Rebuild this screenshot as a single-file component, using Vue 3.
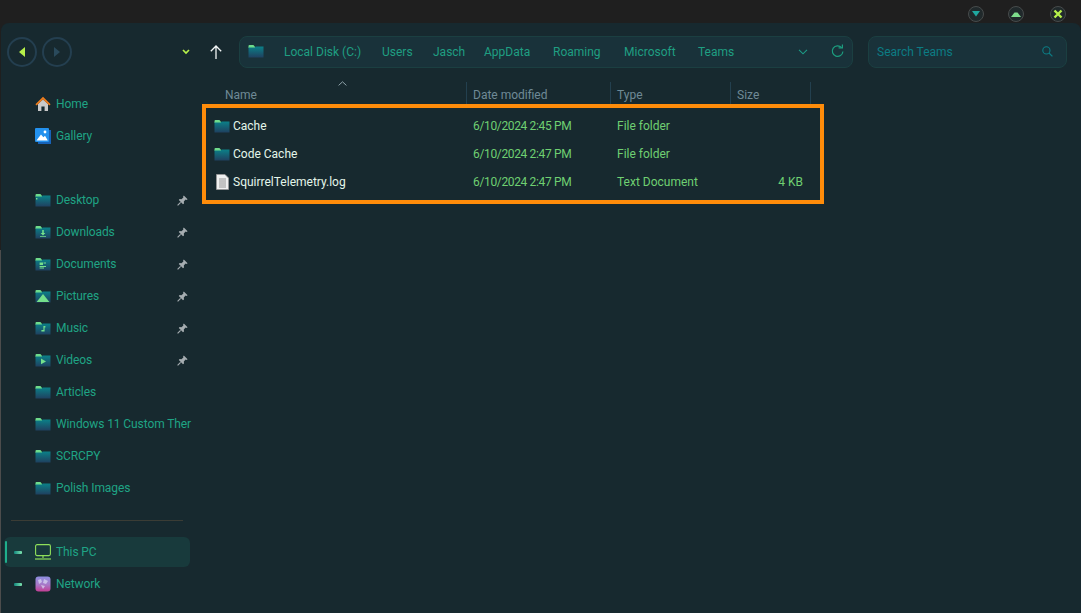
<template>
  <div class="app">
    <svg class="defs" width="0" height="0">
      <defs>
        <linearGradient id="folderBody" x1="0" y1="0" x2="0" y2="1">
          <stop offset="0" stop-color="#0b8088" />
          <stop offset="1" stop-color="#1f4160" />
        </linearGradient>
        <symbol id="folder" viewBox="0 0 16 13">
          <path d="M.5 1C.5 .4 .9 0 1.4 0H5.4L7 1.8V3H.5Z" fill="#6fdc8c" />
          <path d="M.5 2.6H6.8L7.6 1.6H15.5V12.4H.5Z" fill="url(#folderBody)" />
        </symbol>
      </defs>
    </svg>

    <header class="titlebar">
      <button class="win-btn"><svg width="8" height="6" viewBox="0 0 8 6"><path d="M0 0H8L4 5.5Z" fill="#1fa8a0" /></svg></button>
      <button class="win-btn"><svg width="10" height="6" viewBox="0 0 10 6"><path d="M0 6L3.5 1.5H6.5L10 6Z" fill="#7ddc8c" /></svg></button>
      <button class="win-btn"><svg width="10" height="10" viewBox="0 0 10 10"><path d="M1.5 1.5L8.5 8.5M8.5 1.5L1.5 8.5" stroke="#b6f04a" stroke-width="2.4" /></svg></button>
    </header>

    <div class="window">
      <div class="toolbar">
        <button class="nav-btn">
          <svg width="8" height="12" viewBox="0 0 8 12"><path d="M7 1V11L1 6Z" fill="#b6f04a" /></svg>
        </button>
        <button class="nav-btn">
          <svg width="8" height="12" viewBox="0 0 8 12"><path d="M1 1V11L7 6Z" fill="#2a4a5c" /></svg>
        </button>
        <svg class="recent" width="8" height="6" viewBox="0 0 8 6"><path d="M1 1L4 4L7 1" fill="none" stroke="#b6f04a" stroke-width="1.7" /></svg>
        <svg class="up" width="12" height="14" viewBox="0 0 12 14"><path d="M6 14V1M.8 6.2L6 1L11.2 6.2" fill="none" stroke="#f2f6f6" stroke-width="1.3" /></svg>

        <div class="address">
          <svg class="addr-folder" width="16" height="13"><use href="#folder" /></svg>
          <span v-for="c in crumbs" :key="c.name" class="crumb" :style="{ width: c.w + 'px' }">{{ c.name }}</span>
          <svg class="addr-chevron" width="10" height="6" viewBox="0 0 10 6"><path d="M1 .8L5 4.8L9 .8" fill="none" stroke="#1c9c86" stroke-width="1.1" /></svg>
          <svg class="addr-refresh" width="13" height="13" viewBox="0 0 13 13"><path d="M10.6 2.6A5.3 5.3 0 1 0 11.9 6.5" fill="none" stroke="#1c9c7e" stroke-width="1.2" /><path d="M7.6 2.8H11.4V-.6" fill="none" stroke="#1c9c7e" stroke-width="1.2" /></svg>
        </div>

        <div class="search">
          <span>Search Teams</span>
          <svg width="11" height="11" viewBox="0 0 11 11"><circle cx="4.4" cy="4.4" r="3.6" fill="none" stroke="#0c7c84" stroke-width="1.1" /><path d="M7 7L10.4 10.4" stroke="#0c7c84" stroke-width="1.2" /></svg>
        </div>
      </div>

      <div class="body">
        <nav class="sidebar">
          <template v-for="(item, i) in nav" :key="i">
            <div v-if="item.sep" class="sep-slot"><div v-if="!item.hidden" class="sep"></div></div>
            <div v-else class="nav-row" :class="{ active: item.active }">
              <span v-if="item.active" class="indicator"></span>
              <span class="expander"><i v-if="item.expand"></i></span>

              <svg v-if="item.icon === 'home'" class="nav-icon" width="16" height="16" viewBox="0 0 16 16">
                <path d="M3 8V15H6.4V10.6H9.6V15H13V8L8 3.4Z" fill="#c9c9c9" />
                <path d="M.4 8.2L8 .8L15.6 8.2L14.4 9.4L8 3.4L1.6 9.4Z" fill="#ee7d1e" />
              </svg>
              <svg v-else-if="item.icon === 'gallery'" class="nav-icon" width="16" height="16" viewBox="0 0 16 16">
                <rect x="3" y="2" width="13" height="14" fill="#1762b8" />
                <rect x="0" y="0" width="14" height="14" rx="1" fill="#2391ee" />
                <path d="M1.4 12.6L6 6.6L8.4 9.2L10 7.8L12.8 12.6Z" fill="#fff" />
                <circle cx="10" cy="4" r="1.4" fill="#fff" />
              </svg>
              <svg v-else-if="item.icon === 'pc'" class="nav-icon" width="16" height="16" viewBox="0 0 16 16">
                <rect x=".6" y=".6" width="14.8" height="11" rx="1.5" fill="none" stroke="#8fe05a" stroke-width="1.1" />
                <path d="M7.4 12V14H8.6V12Z" fill="#8fe05a" />
                <path d="M0 15H16" stroke="#8fe05a" stroke-width="1.2" />
              </svg>
              <svg v-else-if="item.icon === 'network'" class="nav-icon" width="16" height="16" viewBox="0 0 16 16">
                <defs>
                  <linearGradient id="netFill" x1="0" y1="0" x2="0" y2="1">
                    <stop offset="0" stop-color="#8f8fe0" />
                    <stop offset=".55" stop-color="#a878c8" />
                    <stop offset="1" stop-color="#c23e94" />
                  </linearGradient>
                </defs>
                <rect width="15" height="15" x=".5" y=".5" rx="3" fill="url(#netFill)" />
                <path d="M3 4L6 3L7 6L4 8ZM9 3L13 5L11 8L8 7ZM6 9L10 10L8 13Z" fill="#d8d4f0" opacity=".75" />
              </svg>
              <svg v-else class="nav-icon" width="16" height="13" viewBox="0 0 16 13">
                <use href="#folder" />
                <path v-if="item.glyph" :d="item.glyph" fill="#74e08c" />
              </svg>

              <span class="nav-label">{{ item.label }}</span>
              <svg v-if="item.pin" class="pin" width="11" height="11" viewBox="0 0 11 11">
                <path d="M6.8 .4L10.6 4.2L9.6 4.9L8.6 4.6L6.8 6.6L7 8.4L6 9.2L1.8 5L2.6 4L4.4 4.2L6.4 2.4L6.1 1.4Z" fill="#a6adb1" />
                <path d="M3.6 7.4L.6 10.4" stroke="#a6adb1" stroke-width="1.2" />
              </svg>
            </div>
          </template>
        </nav>

        <main class="files">
          <div class="cols head">
            <span class="hcell name-head">
              Name
              <svg class="sort" width="9" height="5" viewBox="0 0 9 5"><path d="M.6 4.4L4.5 .8L8.4 4.4" fill="none" stroke="#8fa3aa" stroke-width="1" /></svg>
            </span>
            <span class="hcell">Date modified</span>
            <span class="hcell">Type</span>
            <span class="hcell">Size</span>
          </div>

          <div class="highlight">
            <div v-for="f in files" :key="f.name" class="cols row">
              <span class="cell file-name">
                <svg v-if="f.folder" width="16" height="13" viewBox="0 0 16 13"><use href="#folder" /></svg>
                <svg v-else width="13" height="16" viewBox="0 0 13 16" class="doc">
                  <path d="M.5 .5H9L12.5 4V15.5H.5Z" fill="#f0f0f0" stroke="#9a9a9a" stroke-width=".8" />
                  <path d="M3 5H10M3 7H10M3 9H10M3 11H10M3 13H10" stroke="#8a8a8a" stroke-width=".9" />
                </svg>
                <span>{{ f.name }}</span>
              </span>
              <span class="cell date">{{ f.date }}</span>
              <span class="cell">{{ f.type }}</span>
              <span class="cell size">{{ f.size }}</span>
            </div>
          </div>
        </main>
      </div>
    </div>
  </div>
</template>

<script setup>
const crumbs = [
  { name: 'Local Disk (C:)', w: 98 },
  { name: 'Users', w: 51 },
  { name: 'Jasch', w: 51 },
  { name: 'AppData', w: 69 },
  { name: 'Roaming', w: 71 },
  { name: 'Microsoft', w: 74 },
  { name: 'Teams', w: 50 }
]

const nav = [
  { label: 'Home', icon: 'home' },
  { label: 'Gallery', icon: 'gallery' },
  { sep: true, hidden: true },
  { label: 'Desktop', pin: true, glyph: 'M1 4H2.4V5.4H1Z' },
  { label: 'Downloads', pin: true, glyph: 'M7.2 4H8.8V7H10.4L8 9.6L5.6 7H7.2ZM5 10.2H11V11H5Z' },
  { label: 'Documents', pin: true, glyph: 'M4.6 4.4H8V7H4.6ZM8.6 4.4H11V5.6H8.6ZM4.6 8H11V9H4.6ZM4.6 9.6H9V10.4H4.6Z' },
  { label: 'Pictures', pin: true, glyph: 'M1.6 12L8 4L14.4 12Z' },
  { label: 'Music', pin: true, glyph: 'M8.4 4H10.4V5.6H9.6V9.6H6.4V8H8.4Z' },
  { label: 'Videos', pin: true, glyph: 'M6 4.6L11 7.4L6 10.2Z' },
  { label: 'Articles' },
  { label: 'Windows 11 Custom Ther' },
  { label: 'SCRCPY' },
  { label: 'Polish Images' },
  { sep: true },
  { label: 'This PC', icon: 'pc', expand: true, active: true },
  { label: 'Network', icon: 'network', expand: true }
]

const files = [
  { name: 'Cache', folder: true, date: '6/10/2024 2:45 PM', type: 'File folder', size: '' },
  { name: 'Code Cache', folder: true, date: '6/10/2024 2:47 PM', type: 'File folder', size: '' },
  { name: 'SquirrelTelemetry.log', folder: false, date: '6/10/2024 2:47 PM', type: 'Text Document', size: '4 KB' }
]
</script>

<style>
html, body {
  margin: 0;
  background: #1f1f1f;
}
</style>

<style scoped>
.app {
  width: 1081px;
  height: 613px;
  display: flex;
  flex-direction: column;
  overflow: hidden;
  background: linear-gradient(#1f1f1f 250px, #4c4c4c 250px);
  font-family: Roboto, sans-serif;
  font-size: 12px;
}
.defs {
  position: absolute;
}
button {
  padding: 0;
  font: inherit;
  background: none;
}

.titlebar {
  height: 23px;
  flex: none;
  display: flex;
  justify-content: flex-end;
  align-items: flex-start;
  gap: 24px;
  padding: 6px 15px 0 0;
  box-sizing: border-box;
  background: #1f1f1f;
}
.win-btn {
  width: 16px;
  height: 16px;
  border: 1px solid #474b4b;
  border-radius: 50%;
  display: flex;
  align-items: center;
  justify-content: center;
  background: #20292b;
}
.win-btn:last-child {
  margin-left: 2px;
}

.window {
  flex: 1;
  margin-left: 1px;
  display: flex;
  flex-direction: column;
  background: #17292f;
  border-radius: 8px 8px 0 0;
}

.toolbar {
  height: 57px;
  flex: none;
  display: flex;
  align-items: center;
  padding: 0 14px 0 6px;
  box-sizing: border-box;
}
.nav-btn {
  width: 30px;
  height: 30px;
  margin-right: 5px;
  border: 2px solid #243f50;
  border-radius: 50%;
  display: flex;
  align-items: center;
  justify-content: center;
}
.recent {
  margin-left: 105px;
}
.up {
  margin-left: 20px;
}
.address,
.search {
  height: 32px;
  flex: none;
  display: flex;
  align-items: center;
  box-sizing: border-box;
  background: #19323a;
  border: 1px solid #1b3f41;
  border-radius: 8px;
}
.address {
  width: 614px;
  margin-left: 17px;
  padding-left: 8px;
  color: #1f9f82;
}
.addr-folder {
  margin-right: 20px;
  flex: none;
}
.crumb {
  flex: none;
  white-space: nowrap;
}
.addr-chevron {
  margin-left: 50px;
  flex: none;
}
.addr-refresh {
  margin-left: 23px;
  flex: none;
  overflow: visible;
}
.search {
  width: 199px;
  margin-left: 15px;
  padding: 0 13px 0 8px;
  justify-content: space-between;
  color: #0c7c84;
}

.body {
  flex: 1;
  display: flex;
  min-height: 0;
}

.sidebar {
  width: 200px;
  flex: none;
  padding-top: 9px;
  box-sizing: border-box;
  color: #1fa485;
}
.sep-slot {
  height: 32px;
  padding-top: 15px;
  box-sizing: border-box;
}
.sep {
  width: 172px;
  height: 1px;
  margin-left: 10px;
  background: #3b3c35;
}
.nav-row {
  position: relative;
  width: 186px;
  height: 30px;
  margin: 0 0 2px 3px;
  display: flex;
  align-items: center;
  border-radius: 6px;
}
.nav-row.active {
  background: #183a3c;
}
.indicator {
  position: absolute;
  left: 1px;
  top: 4px;
  width: 2px;
  height: 22px;
  border-radius: 1px;
  background: #1fae8c;
}
.expander {
  width: 31px;
  flex: none;
  display: flex;
  padding-left: 10px;
  box-sizing: border-box;
}
.expander i {
  width: 8px;
  height: 3px;
  border-radius: 1px;
  background: linear-gradient(90deg, #12867f, #7ee6b0);
}
.nav-icon {
  flex: none;
  margin-right: 5px;
}
.nav-label {
  flex: 1;
  min-width: 0;
  white-space: nowrap;
  letter-spacing: -0.1px;
}
.pin {
  flex: none;
  margin: 0 2px 0 4px;
}

.files {
  flex: 1;
  min-width: 0;
}
.cols {
  display: grid;
  grid-template-columns: 246px 144px 120px 80px;
}
.head {
  height: 22px;
  margin-left: 20px;
  width: 590px;
  margin-top: 2px;
  color: #6f8a96;
}
.hcell {
  position: relative;
  padding: 4px 0 0 6px;
  border-right: 1px solid #23404f;
  line-height: 18px;
}
.name-head {
  padding-left: 4px;
}
.sort {
  position: absolute;
  left: 117px;
  top: -1px;
}
.highlight {
  width: 622px;
  height: 100px;
  margin-left: 1px;
  padding-top: 4px;
  box-sizing: border-box;
  border: 4px solid #ff8c0a;
  color: #6fd072;
}
.row {
  height: 28px;
  align-items: center;
  margin-left: 14px;
}
.cell {
  padding-left: 7px;
  white-space: nowrap;
}
.date {
  letter-spacing: -0.35px;
}
.file-name {
  display: flex;
  align-items: center;
  gap: 3px;
  padding-left: 0;
  margin-left: -6px;
  color: #e4f6ea;
}
.doc {
  margin: 0 1px 0 2px;
}
.size {
  text-align: right;
  padding-right: 7px;
}
</style>
